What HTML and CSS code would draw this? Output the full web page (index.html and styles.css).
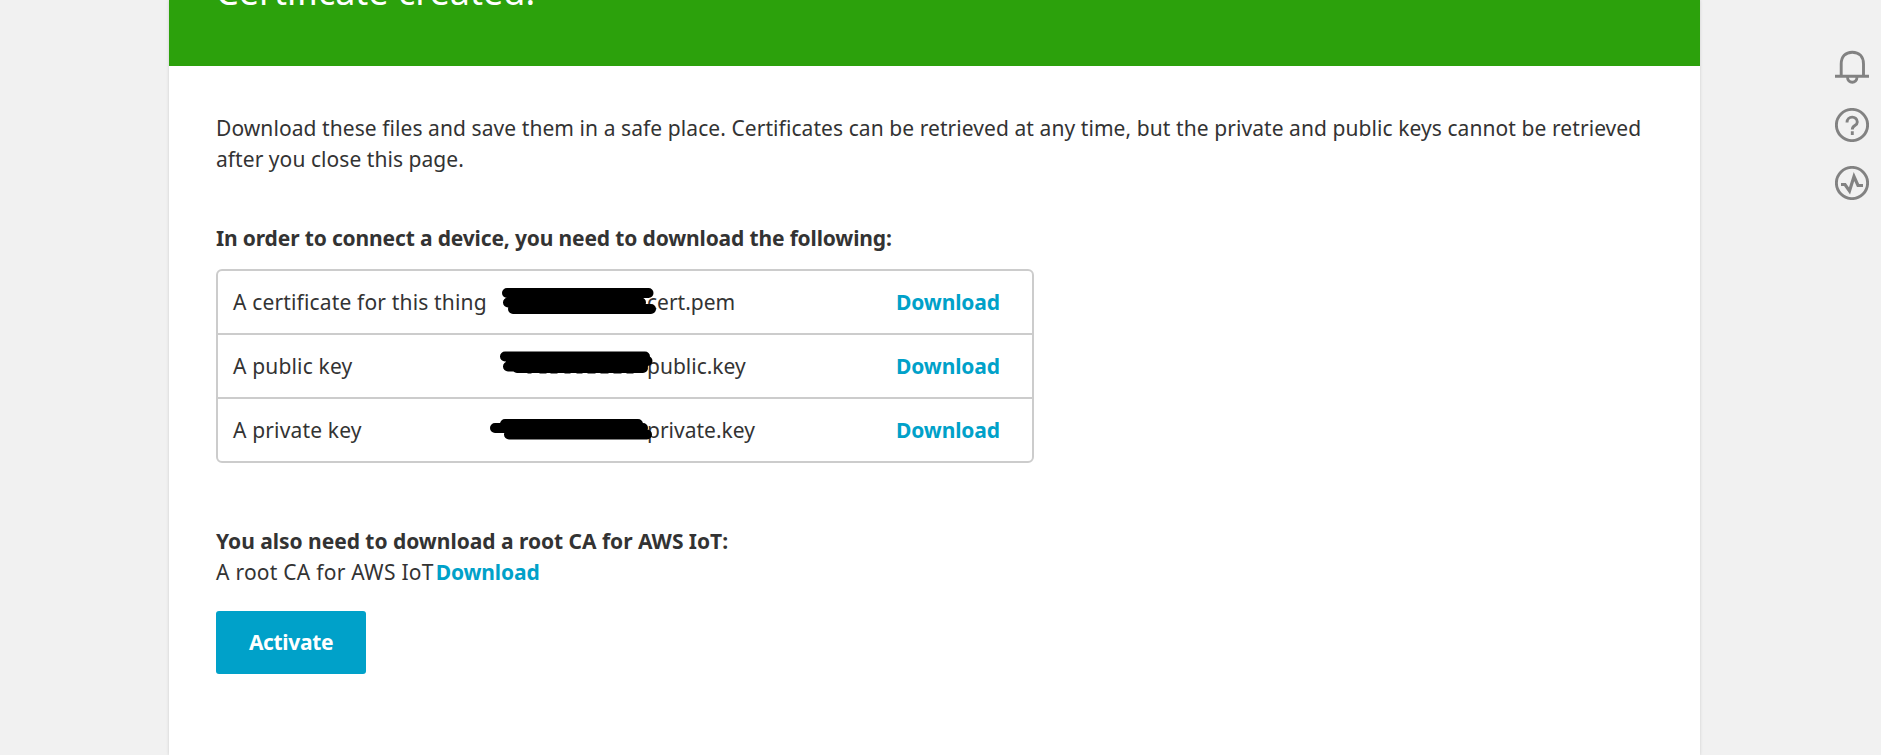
FILE: index.html
```html
<!DOCTYPE html>
<html lang="en">
<head>
<meta charset="utf-8">
<title>Certificate created</title>
<link rel="stylesheet" href="styles.css">
</head>
<body>
<div class="page">
  <main class="panel">
    <header class="banner"><h1 class="banner-title">Certificate created!</h1></header>
    <div class="content">
      <p class="intro"><span class="intro-first">Download these files and save them in a safe place. Certificates can be retrieved at any time, but the private and public keys cannot be retrieved</span><br><span class="intro-last">after you close this page.</span></p>
      <h2 class="subhead need">In order to connect a device, you need to download the following:</h2>
      <div class="files">
        <div class="file"><span class="kind">A certificate for this thing</span>
          <span class="name"><span class="name-cert">cert.pem</span><svg class="mark" width="180" height="64" viewBox="0 0 180 64"><g fill="none" stroke="#000" stroke-width="10" stroke-linecap="round"><path d="M22 23H163.500M23 32.500H156M28 39H166"/><path d="M28 31H158" stroke-width="16" stroke-linecap="butt"/></g></svg></span>
          <a class="link">Download</a></div>
        <div class="file"><span class="kind">A public key</span>
          <span class="name"><span>public.key</span><svg class="mark" width="180" height="64" viewBox="0 0 180 64"><g fill="none" stroke="#000" stroke-width="10" stroke-linecap="round"><path d="M20 22.500H160M23 32.500H158M32 34H158M26 27H162.500"/><path d="M43 39h3M55 39h6M66 39h6M80 39h5M92 39h5M103 39h7M116 39h7M129 39h7M142 39h6" stroke-width="1.200"/></g></svg></span>
          <a class="link">Download</a></div>
        <div class="file"><span class="kind">A private key</span>
          <span class="name"><span>private.key</span><svg class="mark" width="180" height="64" viewBox="0 0 180 64"><g fill="none" stroke="#000" stroke-width="10" stroke-linecap="round"><path d="M20 26H153M10 30H158M24 36.500H162"/></g></svg></span>
          <a class="link">Download</a></div>
      </div>
      <h2 class="subhead also">You also need to download a root CA for AWS IoT:</h2>
      <p class="root"><span class="root-label">A root CA for AWS IoT</span><a class="link">Download</a></p>
      <button class="activate">Activate</button>
    </div>
  </main>
  <aside class="tools">
    <svg class="tool" viewBox="0 0 34 34"><path d="M6.200 26V14C6.200 6.500 10.500 2.200 17.300 2.200S28.500 6.500 28.500 14V26M0 26.200H34M12.500 27C12.500 34 22 34 22 27"/></svg>
    <svg class="tool" viewBox="0 0 34 34"><circle cx="17" cy="17" r="15.600"/><path d="M12 14.500C12 7.300 22.300 7.500 22.300 14C22.300 18 17.300 17 17.300 21.500M17.300 23.200V27"/></svg>
    <svg class="tool" viewBox="0 0 34 34"><circle cx="17" cy="17" r="15.600"/><path d="M6 18.500H10L14.500 25L19 10.500L23 19.500H28" stroke-width="3.200"/></svg>
  </aside>
</div>
</body>
</html>
```
FILE: styles.css
```css
* { box-sizing: border-box; }
body { margin: 0; height: 755px; overflow: hidden; background: #f1f1f1; color: #333; font: 21px/31px "Noto Sans", "Open Sans", sans-serif; }
h1, h2, p { margin: 0; }
.page { display: flex; height: 755px; padding-left: 169px; }
.panel { width: 1531px; background: #fff; box-shadow: 0 0 3px rgba(0, 0, 0, .15); white-space: nowrap; }
.banner { height: 66px; background: #2ca10c; color: #fff; padding-left: 47px; display: flex; overflow: hidden; }
.banner-title { margin-top: -32px; height: 48px; font-size: 36px; line-height: 48px; font-weight: 400; }
.content { padding: 47px 46px 0 47px; }
.intro-first { letter-spacing: .074px; }
.intro-last { letter-spacing: .05px; }
.subhead { font-size: 21px; font-weight: 700; }
.need { margin: 48px 0 15px; letter-spacing: -.15px; }
.also { margin-top: 63px; letter-spacing: -.03px; }
.files { width: 818px; border: 2px solid #ccc; border-radius: 6px; }
.file { display: grid; grid-template-columns: 252px 411px 1fr; height: 62px; padding-left: 15px; align-items: center; }
.file + .file { height: 64px; border-top: 2px solid #ccc; }
.kind { letter-spacing: .16px; }
.name { position: relative; padding-left: 162px; }
.mark { position: absolute; left: 0; top: -16.5px; }
.link { color: #00a1c9; font-weight: 700; letter-spacing: -.13px; }
.root-label { letter-spacing: .25px; margin-right: 2px; }
.activate { display: block; width: 150px; height: 63px; margin-top: 23px; border: 0; border-radius: 3px; background: #00a1c9; color: #fff; font: 700 21px/31px "Noto Sans", sans-serif; letter-spacing: -.35px; }
.tools { display: flex; flex-direction: column; gap: 24px; margin-left: 135px; padding-top: 50px; }
.tool { width: 34px; height: 34px; fill: none; stroke: #828282; stroke-width: 2.9; }
```
